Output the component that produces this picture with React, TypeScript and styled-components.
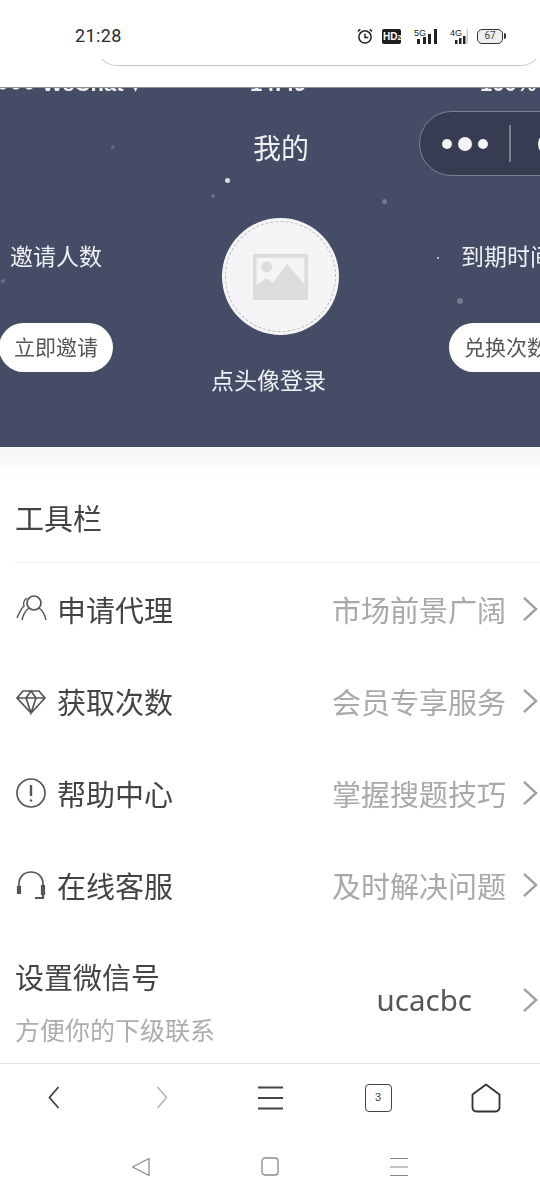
import * as React from "react";
import styled, { createGlobalStyle } from "styled-components";

const GlobalStyle = createGlobalStyle`
  html, body {
    margin: 0;
    padding: 0;
    background: #fff;
  }
  body {
    font-family: "Noto Sans CJK SC", "Noto Sans", "Liberation Sans", sans-serif;
  }
  * {
    box-sizing: border-box;
  }
`;

const rows = [
  { icon: "user", label: "申请代理", hint: "市场前景广阔" },
  { icon: "diamond", label: "获取次数", hint: "会员专享服务" },
  { icon: "alert", label: "帮助中心", hint: "掌握搜题技巧" },
  { icon: "headset", label: "在线客服", hint: "及时解决问题" },
];

const stars = [
  { x: 111, y: 57, size: 4, alpha: 0.18 },
  { x: 225, y: 90, size: 5, alpha: 0.8 },
  { x: 211, y: 106, size: 4, alpha: 0.2 },
  { x: 382, y: 111, size: 5, alpha: 0.25 },
  { x: 1, y: 191, size: 4, alpha: 0.2 },
  { x: 437, y: 169, size: 2, alpha: 0.8 },
  { x: 457, y: 210, size: 6, alpha: 0.25 },
];

function RowIcon({ name }: { name: string }) {
  if (name === "user") {
    return (
      <IconSvg viewBox="0 0 32 32">
        <circle cx="19" cy="10" r="7" />
        <path d="M14 15C10 18 8 22 7 27M24 15c4 3 6 7 7 12M12 5C9 7 8 10 9 13 6 16 4 20 2 25" strokeWidth="1.4" />
      </IconSvg>
    );
  }
  if (name === "diamond") {
    return (
      <IconSvg viewBox="0 0 32 32">
        <path d="M8 6h16l6 7-14 15L2 13zM2 13h28M11 13l5 15 5-15M11 13l5-7 5 7" />
      </IconSvg>
    );
  }
  if (name === "alert") {
    return (
      <IconSvg viewBox="0 0 32 32">
        <circle cx="16" cy="16" r="14" />
        <path d="M16 8v11M16 22.5v2" strokeWidth="2.4" />
      </IconSvg>
    );
  }
  return (
    <IconSvg viewBox="0 0 32 32">
      <path d="M4 20v-5C4 8 9 3 16 3s12 5 12 12v5" />
      <path d="M3 18h2v6H3zM27 17h2v8h-2zM28 25v4h-8" strokeWidth="2.2" />
    </IconSvg>
  );
}

function Chevron() {
  return (
    <ChevronSvg viewBox="0 0 18 28">
      <path d="M2 2l13 12L2 26" />
    </ChevronSvg>
  );
}

function Signal({ label, narrow }: { label: string; narrow?: boolean }) {
  return (
    <SignalWrap $narrow={narrow}>
      <SignalLabel>{label}</SignalLabel>
      {narrow ? (
        <svg width="13" height="15" viewBox="0 0 13 15">
          <rect x="0" y="11" width="2.5" height="4" fill="#222" />
          <rect x="4" y="9" width="2.5" height="6" fill="#222" />
          <rect x="8" y="7" width="2.5" height="8" fill="#222" />
          <rect x="11.5" y="0" width="1.5" height="15" fill="#ccc" />
        </svg>
      ) : (
        <svg width="20" height="15" viewBox="0 0 20 15">
          <rect x="0" y="10" width="3" height="5" fill="#222" />
          <rect x="6" y="8" width="3" height="7" fill="#222" />
          <rect x="11" y="5" width="3" height="10" fill="#222" />
          <rect x="17" y="0" width="3" height="15" fill="#222" />
        </svg>
      )}
    </SignalWrap>
  );
}

export default function App() {
  return (
    <Page>
      <GlobalStyle />
      <StatusBar>
        <Clock>21:28</Clock>
        <StatusIcons>
          <svg width="16" height="16" viewBox="0 0 17 17" fill="none" stroke="#222" strokeWidth="1.6">
            <circle cx="8.5" cy="9.5" r="6.5" />
            <path d="M8.5 6V10H12M1 3.5L3.5 1.5M16 3.5L13.5 1.5" />
          </svg>
          <HdBadge>HD<small>2</small></HdBadge>
          <Signal label="5G" />
          <Signal label="4G" narrow />
          <Battery>67</Battery>
        </StatusIcons>
      </StatusBar>
      <SearchEdge />

      <Hero>
        <ClippedBar>
          <span>●●● WeChat ▾</span>
          <span>14:49</span>
          <span>100%</span>
        </ClippedBar>
        {stars.map((s) => (
          <Star
            key={`${s.x}-${s.y}`}
            style={{ left: s.x, top: s.y, width: s.size, height: s.size, opacity: s.alpha }}
          />
        ))}
        <Capsule>
          <Dot />
          <Dot $big />
          <Dot />
          <CapsuleLine />
          <CapsuleRing />
        </Capsule>
        <HeroTitle>我的</HeroTitle>
        <StatsRow>
          <SideCol>
            <SideLabel>邀请人数</SideLabel>
            <SideButton>立即邀请</SideButton>
          </SideCol>
          <CenterCol>
            <Avatar>
              <svg width="59" height="46" viewBox="0 0 60 50">
                <path
                  fillRule="evenodd"
                  fill="#dcdcdc"
                  d="M2 0h56a2 2 0 0 1 2 2v46a2 2 0 0 1-2 2H2a2 2 0 0 1-2-2V2a2 2 0 0 1 2-2zM4 4v30l10-8 8 5 15-20 19 22V4z"
                />
                <circle cx="15" cy="14" r="6" fill="#dcdcdc" />
                <path d="M4 46V36l10-8 8 5 15-21 19 23v11z" fill="#dcdcdc" />
              </svg>
            </Avatar>
            <LoginText>点头像登录</LoginText>
          </CenterCol>
          <SideCol $right>
            <SideLabel>到期时间</SideLabel>
            <SideButton>兑换次数</SideButton>
          </SideCol>
        </StatsRow>
      </Hero>
      <HeroFade />

      <Content>
        <SectionTitle>工具栏</SectionTitle>
        {rows.map((r) => (
          <MenuRow key={r.label}>
            <RowIcon name={r.icon} />
            <RowLabel>{r.label}</RowLabel>
            <RowHint>{r.hint}</RowHint>
            <Chevron />
          </MenuRow>
        ))}
        <WechatRow>
          <WechatText>
            <RowLabel>设置微信号</RowLabel>
            <WechatSub>方便你的下级联系</WechatSub>
          </WechatText>
          <WechatValue>ucacbc</WechatValue>
          <Chevron />
        </WechatRow>
      </Content>

      <BrowserBar>
        <BarSlot>
          <svg width="12" height="23" viewBox="0 0 12 23" fill="none" stroke="#444" strokeWidth="1.8">
            <path d="M10.5 1L1.5 11.5l9 10.5" />
          </svg>
        </BarSlot>
        <BarSlot>
          <svg width="12" height="23" viewBox="0 0 12 23" fill="none" stroke="#b5b5b5" strokeWidth="1.6">
            <path d="M1.5 1l9 10.5-9 10.5" />
          </svg>
        </BarSlot>
        <BarSlot>
          <svg width="25" height="24" viewBox="0 0 25 24" fill="none" stroke="#444" strokeWidth="1.8">
            <path d="M0 1.5h25M0 12h25M0 22.5h25" />
          </svg>
        </BarSlot>
        <BarSlot>
          <TabBox>3</TabBox>
        </BarSlot>
        <BarSlot>
          <svg width="30" height="30" viewBox="0 0 30 30" fill="none" stroke="#333" strokeWidth="1.8">
            <path d="M15 1.5L28.5 11.5V24a4 4 0 0 1-4 4.500h-19a4 4 0 0 1-4-4.500V11.5z" strokeLinejoin="round" />
          </svg>
        </BarSlot>
      </BrowserBar>

      <NavBar>
        <svg width="20" height="20" viewBox="0 0 20 20" fill="none" stroke="#8a8a8a" strokeWidth="1.3">
          <path d="M18 1.5V18.5L1.5 10z" strokeLinejoin="round" />
        </svg>
        <svg width="18" height="19" viewBox="0 0 18 19" fill="none" stroke="#8a8a8a" strokeWidth="1.3">
          <rect x="1" y="1" width="16" height="17" rx="3" />
        </svg>
        <svg width="20" height="20" viewBox="0 0 20 20" fill="none" stroke="#8a8a8a" strokeWidth="1.2">
          <path d="M1 1.5h18M1 10h18M1 18.5h18" />
        </svg>
      </NavBar>
    </Page>
  );
}

const Page = styled.div`
  width: 540px;
  height: 1200px;
  overflow: hidden;
  position: relative;
  background: #fff;
  color: #444;
`;

const StatusBar = styled.div`
  height: 66px;
  padding: 26px 35px 0 75px;
  display: flex;
  justify-content: space-between;
  align-items: flex-start;
`;

const Clock = styled.div`
  font-family: "Roboto", "Noto Sans", sans-serif;
  font-size: 18px;
  line-height: 20px;
  letter-spacing: 0.4px;
  color: #2a2a2a;
`;

const StatusIcons = styled.div`
  display: flex;
  align-items: center;
  gap: 9px;
  margin-top: 2px;
`;

const HdBadge = styled.div`
  width: 19px;
  height: 15px;
  border-radius: 2px;
  background: #1d1d1d;
  color: #fff;
  font-family: "Liberation Sans", sans-serif;
  font-size: 10px;
  font-weight: 700;
  line-height: 15px;
  padding-left: 1px;
  white-space: nowrap;

  small {
    font-size: 7px;
  }
`;

const SignalWrap = styled.div<{ $narrow?: boolean }>`
  width: ${({ $narrow }) => ($narrow ? 22 : 27)}px;
  height: 15px;
  position: relative;
  display: flex;
  justify-content: flex-end;
  align-items: flex-end;
`;

const SignalLabel = styled.span`
  position: absolute;
  left: 4px;
  top: 0;
  font-family: "Liberation Sans", sans-serif;
  font-size: 9px;
  line-height: 9px;
  color: #222;
`;

const Battery = styled.div`
  width: 26px;
  height: 15px;
  margin-right: 2px;
  border: 1.5px solid #333;
  border-radius: 5px;
  background: #eee;
  font-family: "Roboto", sans-serif;
  font-size: 10px;
  line-height: 12px;
  text-align: center;
  color: #444;
  position: relative;

  &::after {
    content: "";
    position: absolute;
    right: -4px;
    top: 3px;
    width: 2px;
    height: 6px;
    background: #333;
    border-radius: 0 2px 2px 0;
  }
`;

const SearchEdge = styled.div`
  position: absolute;
  left: 95px;
  right: -3px;
  top: 34px;
  height: 32px;
  border: 1.5px solid #c8c8c8;
  border-top: 0;
  border-left-color: transparent;
  border-right-color: transparent;
  border-radius: 0 0 22px 22px;
`;

const Hero = styled.div`
  position: relative;
  margin-top: 21px;
  height: 360px;
  overflow: hidden;
  background: #454c66;
  border-top: 1px solid #8c8f9c;
  color: #eef0f4;
  filter: blur(0.5px);
`;

const ClippedBar = styled.div`
  position: absolute;
  left: -4px;
  top: -15px;
  display: grid;
  grid-template-columns: 254px 230px 80px;
  font-family: "Liberation Sans", sans-serif;
  font-size: 22px;
  font-weight: 700;
  line-height: 22px;
  color: #f2f2f2;
  white-space: nowrap;
`;

const Star = styled.i`
  position: absolute;
  border-radius: 50%;
  background: #fff;
`;

const Capsule = styled.div`
  position: absolute;
  left: 419px;
  top: 23px;
  width: 180px;
  height: 65px;
  border: 1.5px solid #7d8295;
  border-radius: 33px;
  background: #363c52;
  display: flex;
  align-items: center;
  padding-left: 22px;
  gap: 6px;
`;

const Dot = styled.i<{ $big?: boolean }>`
  width: ${({ $big }) => ($big ? 14 : 10)}px;
  height: ${({ $big }) => ($big ? 14 : 10)}px;
  border-radius: 50%;
  background: #f4f4f6;
`;

const CapsuleLine = styled.i`
  width: 1.5px;
  height: 37px;
  background: #7d8295;
  margin-left: 15px;
`;

const CapsuleRing = styled.i`
  width: 24px;
  height: 24px;
  border: 5px solid #f4f4f6;
  border-radius: 50%;
  margin-left: 21px;
`;

const HeroTitle = styled.div`
  padding: 39px 0 0 22px;
  text-align: center;
  font-size: 28px;
  line-height: 40px;
  height: 130px;
`;

const StatsRow = styled.div`
  display: flex;
  justify-content: space-between;
  margin: 0 -95px 0 -3px;
`;

const SideCol = styled.div<{ $right?: boolean }>`
  flex: none;
  width: ${({ $right }) => ($right ? 186 : 118)}px;
  padding-top: 21px;
  display: flex;
  flex-direction: column;
  align-items: ${({ $right }) => ($right ? "flex-start" : "center")};

  > div:first-child {
    margin-left: ${({ $right }) => ($right ? 12 : 0)}px;
  }
`;

const SideLabel = styled.div`
  font-size: 23px;
  line-height: 32px;
  white-space: nowrap;
`;

const SideButton = styled.div`
  margin-top: 52px;
  height: 49px;
  padding: 0 15px;
  border-radius: 25px;
  background: #fff;
  color: #565656;
  font-size: 21px;
  line-height: 47px;
  white-space: nowrap;
`;

const CenterCol = styled.div`
  display: flex;
  flex-direction: column;
  align-items: center;
  width: 170px;
  margin-left: -3px;
`;

const Avatar = styled.div`
  width: 117px;
  height: 117px;
  border-radius: 50%;
  background: #f5f5f7;
  display: flex;
  align-items: center;
  justify-content: center;
  position: relative;

  &::after {
    content: "";
    position: absolute;
    inset: 3px;
    border: 1px dashed #b9bac2;
    border-radius: 50%;
  }
`;

const LoginText = styled.div`
  margin: 28px 24px 0 0;
  font-size: 23px;
  line-height: 32px;
  white-space: nowrap;
`;

const HeroFade = styled.div`
  height: 28px;
  background: linear-gradient(#f3f4f8, #f8f8f8 40%, #fff);
`;

const Content = styled.div`
  padding-left: 15px;
  height: 588px;
  filter: blur(0.5px);
`;

const SectionTitle = styled.div`
  height: 88px;
  padding-top: 22px;
  border-bottom: 1px solid #efefef;
  font-size: 29px;
  line-height: 40px;
  color: #444;
`;

const MenuRow = styled.div`
  height: 92px;
  padding-right: 1px;
  display: flex;
  align-items: center;
`;

const IconSvg = styled.svg`
  width: 32px;
  height: 32px;
  margin-right: 10px;
  flex: none;
  fill: none;
  stroke: #555;
  stroke-width: 1.7;
`;

const RowLabel = styled.div`
  font-size: 29px;
  line-height: 40px;
  color: #444;
  white-space: nowrap;
`;

const RowHint = styled.div`
  margin-left: auto;
  font-size: 29px;
  line-height: 40px;
  color: #a9a9a9;
  white-space: nowrap;
`;

const ChevronSvg = styled.svg`
  width: 17px;
  height: 26px;
  margin-left: 16px;
  flex: none;
  fill: none;
  stroke: #a0a0a0;
  stroke-width: 2.6;
`;

const WechatRow = styled.div`
  height: 130px;
  padding: 8px 1px 0 0;
  display: flex;
  align-items: center;
`;

const WechatText = styled.div`
  display: flex;
  flex-direction: column;
  gap: 16px;
  margin-top: 1px;
`;

const WechatSub = styled.div`
  font-size: 25px;
  line-height: 34px;
  color: #adadad;
  white-space: nowrap;
`;

const WechatValue = styled.div`
  margin-left: auto;
  margin-right: 34px;
  font-family: "Noto Sans", sans-serif;
  font-size: 29.5px;
  line-height: 40px;
  color: #555;
`;

const BrowserBar = styled.div`
  height: 72px;
  border-top: 1px solid #e4e4e4;
  display: grid;
  grid-template-columns: repeat(5, 1fr);
  background: #fff;
`;

const BarSlot = styled.div`
  display: flex;
  align-items: center;
  justify-content: center;
  padding-bottom: 4px;
`;

const TabBox = styled.div`
  width: 27px;
  height: 28px;
  border: 1.8px solid #444;
  border-radius: 4px;
  font-family: "Liberation Sans", sans-serif;
  font-size: 11px;
  line-height: 24px;
  text-align: center;
  color: #444;
`;

const NavBar = styled.div`
  height: 64px;
  padding: 22px 131px 0;
  display: flex;
  justify-content: space-between;
  align-items: flex-start;
`;
